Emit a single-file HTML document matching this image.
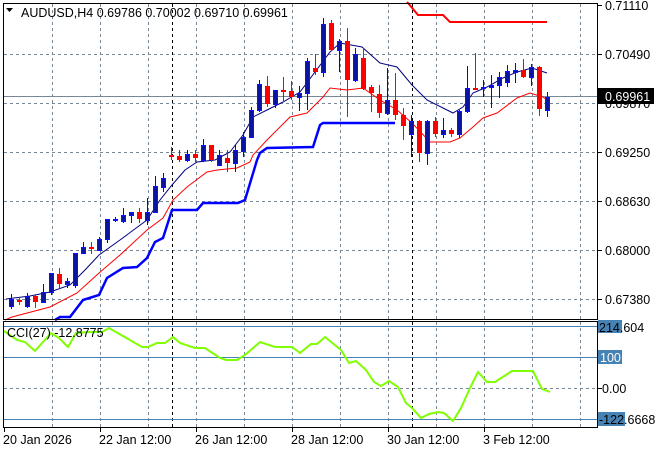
<!DOCTYPE html>
<html><head><meta charset="utf-8"><style>
html,body{margin:0;padding:0;background:#fff;}
svg{display:block;font-family:"Liberation Sans",sans-serif;font-size:12.5px;}
</style></head><body>
<svg width="660" height="450" viewBox="0 0 660 450" xmlns="http://www.w3.org/2000/svg">
<rect width="660" height="450" fill="#fff"/>
<g stroke="#778899" stroke-width="1" stroke-dasharray="3,3" fill="none">
<path d="M4 54.5H597M4 103.5H597M4 152.5H597M4 201.5H597M4 250.5H597M4 299.5H597"/>
<path d="M52.5 4V319M100.5 4V319M148.5 4V319M196.5 4V319M244.5 4V319M292.5 4V319M340.5 4V319M388.5 4V319M436.5 4V319M484.5 4V319M532.5 4V319M580.5 4V319"/>
<path d="M52.5 322V427M100.5 322V427M148.5 322V427M196.5 322V427M244.5 322V427M292.5 322V427M340.5 322V427M388.5 322V427M436.5 322V427M484.5 322V427M532.5 322V427M580.5 322V427M4 388.5H597"/>
</g>
<g stroke="#000" stroke-dasharray="3,3"><path d="M172.5 4V319M412.5 4V319M172.5 322V427M412.5 322V427"/></g>
<path d="M4 96.5H597" stroke="#778899"/>
<polyline fill="none" stroke="#0000ff" stroke-width="2.5" points="55,320 60,317 70,317 83,300 99,295 107,278 123,268 137,267 147,258 155,242 163,238 172,210 197,210 203,203 238,203 245,200 257,160 260,153 267,148 313,147 320,125 323,123 395,123"/>
<polyline fill="none" stroke="#ff0000" stroke-width="2" points="407,2 408,3 418,15 443,15 450,22 547,22"/>
<polyline fill="none" stroke="#ff0000" stroke-width="1" points="5,320 12,317 50,307 77,293 99,273 120,255 147,230 163,218 173,200 187,187 207,172 217,170 237,168 250,162 253,155 267,140 290,117 307,113 323,97 330,88 347,90 363,88 380,100 397,110 412,123 430,142 450,142 460,138 473,127 483,118 497,113 517,98 530,93 543,97 547,100"/>
<polyline fill="none" stroke="#000080" stroke-width="1" points="6,299 30,296 50,292 70,285 85,270 99,255 120,240 147,220 160,200 172,185 185,170 197,162 215,160 230,152 243,135 253,117 267,110 283,102 300,92 330,52 340,43 362,47 380,63 397,67 412,85 427,100 453,113 463,107 473,93 487,87 503,78 517,72 532,68 547,73"/>
<g stroke-width="1">
<g stroke="#0000ff"><path d="M11.5 294V309M27.5 293V308M43.5 284V302M51.5 273V295M67.5 278V288M75.5 253V288M83.5 242V254M99.5 237V250M107.5 219V243M115.5 217V222M123.5 208V223M131.5 212V223M147.5 198V225M155.5 176V213M163.5 173V192M187.5 150V162M203.5 139V162M219.5 150V165M235.5 145V172M243.5 132V157M251.5 107V138M259.5 80V112M275.5 90V108M299.5 86V111M307.5 58V110M323.5 18V77M339.5 39V72M355.5 48V82M387.5 68V115M411.5 115V157M427.5 120V165M443.5 118V138M459.5 110V138M467.5 66V113M483.5 80V97M491.5 75V108M499.5 72V98M507.5 65V87M515.5 63V83M531.5 64V86M547.5 92V117"/></g>
<g stroke="#ff0000"><path d="M19.5 297V305M35.5 295V308M59.5 268V288M91.5 242V254M139.5 208V223M171.5 147V160M179.5 150V162M195.5 150V162M211.5 145V162M227.5 150V172M267.5 76V107M283.5 77V102M291.5 81V100M315.5 54V75M331.5 20V51M347.5 28V117M363.5 48V90M371.5 85V112M379.5 85V118M395.5 73V120M403.5 108V140M419.5 120V162M435.5 117V137M451.5 128V137M475.5 53V90M523.5 59V78M539.5 66V116"/></g>
</g>
<g fill="#0a14a0" stroke="#1010ff" stroke-width="1">
<rect x="9.5" y="299.5" width="4" height="7"/><rect x="25.5" y="296.5" width="4" height="10"/><rect x="41.5" y="292.5" width="4" height="10"/><rect x="49.5" y="273.5" width="4" height="19"/><rect x="65.5" y="281.5" width="4" height="3"/><rect x="73.5" y="253.5" width="4" height="32"/><rect x="81.5" y="247.5" width="4" height="6"/><rect x="97.5" y="239.5" width="4" height="11"/><rect x="105.5" y="219.5" width="4" height="20"/><rect x="113.5" y="219.5" width="4" height="1"/><rect x="121.5" y="215.5" width="4" height="6"/><rect x="129.5" y="212.5" width="4" height="3"/><rect x="145.5" y="212.5" width="4" height="8"/><rect x="153.5" y="186.5" width="4" height="26"/><rect x="161.5" y="178.5" width="4" height="9"/><rect x="185.5" y="154.5" width="4" height="6"/><rect x="201.5" y="145.5" width="4" height="15"/><rect x="217.5" y="155.5" width="4" height="10"/><rect x="233.5" y="150.5" width="4" height="13"/><rect x="241.5" y="137.5" width="4" height="14"/><rect x="249.5" y="110.5" width="4" height="27"/><rect x="257.5" y="84.5" width="4" height="26"/><rect x="273.5" y="90.5" width="4" height="14"/><rect x="297.5" y="93.5" width="4" height="4"/><rect x="305.5" y="61.5" width="4" height="32"/><rect x="321.5" y="24.5" width="4" height="48"/><rect x="337.5" y="41.5" width="4" height="9"/><rect x="353.5" y="54.5" width="4" height="26"/><rect x="385.5" y="100.5" width="4" height="13"/><rect x="409.5" y="121.5" width="4" height="13"/><rect x="425.5" y="121.5" width="4" height="32"/><rect x="441.5" y="130.5" width="4" height="4"/><rect x="457.5" y="111.5" width="4" height="23"/><rect x="465.5" y="88.5" width="4" height="23"/><rect x="481.5" y="87.5" width="4" height="1"/><rect x="489.5" y="85.5" width="4" height="2"/><rect x="497.5" y="77.5" width="4" height="8"/><rect x="505.5" y="71.5" width="4" height="11"/><rect x="513.5" y="70.5" width="4" height="2"/><rect x="529.5" y="67.5" width="4" height="10"/><rect x="545.5" y="97.5" width="4" height="13"/>
</g>
<g fill="#ff0000">
<rect x="17" y="300" width="5" height="2"/><rect x="33" y="296" width="5" height="6"/><rect x="57" y="274" width="5" height="10"/><rect x="89" y="247" width="5" height="2"/><rect x="137" y="212" width="5" height="7"/><rect x="169" y="155" width="5" height="2"/><rect x="177" y="156" width="5" height="4"/><rect x="193" y="154" width="5" height="4"/><rect x="209" y="145" width="5" height="15"/><rect x="225" y="158" width="5" height="5"/><rect x="265" y="86" width="5" height="18"/><rect x="281" y="90" width="5" height="2"/><rect x="289" y="91" width="5" height="6"/><rect x="313" y="68" width="5" height="4"/><rect x="329" y="23" width="5" height="27"/><rect x="345" y="41" width="5" height="39"/><rect x="361" y="58" width="5" height="31"/><rect x="369" y="87" width="5" height="6"/><rect x="377" y="94" width="5" height="19"/><rect x="393" y="100" width="5" height="15"/><rect x="401" y="115" width="5" height="11"/><rect x="417" y="121" width="5" height="32"/><rect x="433" y="121" width="5" height="13"/><rect x="449" y="130" width="5" height="4"/><rect x="473" y="88" width="5" height="2"/><rect x="521" y="70" width="5" height="7"/><rect x="537" y="67" width="5" height="42"/>
</g>
<g stroke="#4682b4" stroke-width="1"><path d="M4 326.5H597M4 357.5H597M4 419.5H597"/></g>
<polyline fill="none" stroke="#7fff00" stroke-width="2" points="4,331 17,340 25,342 35,351 51,333 59,338 68,347 76,333 89,332 102,332 109,328 142,347 148,347 157,343 165,343 173,337 180,343 195,348 205,348 220,358 226,360 237,360 245,355 260,342 275,347 292,347 300,353 311,344 317,344 325,337 341,350 349,363 356,361 366,370 374,382 381,386 389,381 398,387 406,403 412,408 421,418 429,414 438,412 444,413 453,421 461,408 470,388 478,372 487,382 495,382 512,371 533,371 542,389 550,392"/>
<rect x="3.5" y="3.5" width="594" height="316" fill="none" stroke="#000"/>
<rect x="3.5" y="321.5" width="594" height="106" fill="none" stroke="#000"/>
<g stroke="#000"><path d="M597 5.5H602M597 54.5H602M597 103.5H602M597 152.5H602M597 201.5H602M597 250.5H602M597 299.5H602M597 388.5H602"/>
<path d="M4.5 428V432M100.5 428V432M196.5 428V432M292.5 428V432M388.5 428V432M484.5 428V432"/></g>
<g fill="#000">
<text x="605" y="10">0.71110</text>
<text x="605" y="59">0.70490</text>
<text x="605" y="108">0.69870</text>
<text x="605" y="157">0.69250</text>
<text x="605" y="206">0.68630</text>
<text x="605" y="255">0.68000</text>
<text x="605" y="304">0.67380</text>
</g>
<rect x="598" y="88" width="56" height="16" fill="#000"/>
<text x="605" y="101" fill="#fff">0.69961</text>
<rect x="598" y="320" width="24" height="13" fill="#4682b4"/>
<text x="599" y="332" fill="#000">214.604</text>
<rect x="598" y="350" width="24" height="14" fill="#4682b4"/>
<text x="600" y="362" fill="#fff">100</text>
<text x="602" y="393" fill="#000">0.00</text>
<rect x="598" y="412" width="27" height="14" fill="#4682b4"/>
<text x="599" y="424" fill="#000">-122.6668</text>
<path d="M6 8H13L9.5 12Z" fill="#000"/>
<text x="21" y="17" fill="#000">AUDUSD,H4  0.69786 0.70002 0.69710 0.69961</text>
<text x="7" y="337" fill="#000">CCI(27) -12.8775</text>
<g fill="#000">
<text x="3" y="444">20 Jan 2026</text>
<text x="99" y="444">22 Jan 12:00</text>
<text x="195" y="444">26 Jan 12:00</text>
<text x="291" y="444">28 Jan 12:00</text>
<text x="387" y="444">30 Jan 12:00</text>
<text x="483" y="444">3 Feb 12:00</text>
</g>
</svg>
</body></html>
